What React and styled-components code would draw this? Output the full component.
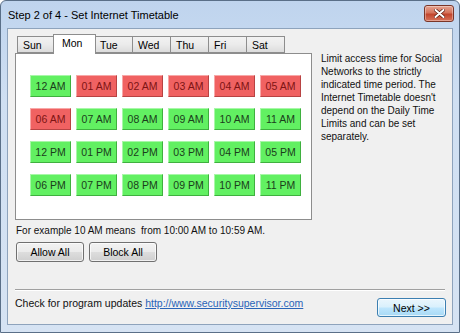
import React, { useState } from 'react';
import styled, { createGlobalStyle } from 'styled-components';

const GlobalStyle = createGlobalStyle`
  html, body {
    margin: 0;
    padding: 0;
    background: #ffffff;
  }
  body {
    font-family: 'Liberation Sans', Arial, sans-serif;
    font-size: 10px;
    color: #111;
  }
`;

const Window = styled.div`
  width: 460px;
  height: 333px;
  box-sizing: border-box;
  border: 1px solid #5a6f88;
  border-radius: 6px 6px 0 0;
  background: linear-gradient(180deg, #bfd4ee 0%, #cfdff2 30%, #d6e3f3 100%);
  display: flex;
  flex-direction: column;
  overflow: hidden;
`;

const TitleBar = styled.div`
  height: 27px;
  display: flex;
  align-items: center;
  justify-content: space-between;
  padding: 0 5px 0 7px;
  flex-shrink: 0;
`;

const Title = styled.div`
  font-size: 11px;
  color: #000;
  padding-top: 1px;
`;

const CloseButton = styled.div`
  width: 28px;
  height: 15px;
  margin-top: -3px;
  border: 1px solid #7a3528;
  border-radius: 3px;
  background: linear-gradient(180deg, #e6a491 0%, #d5735c 45%, #c2452d 55%, #d7725a 100%);
  display: flex;
  align-items: center;
  justify-content: center;
  box-shadow: inset 0 0 0 1px rgba(255, 255, 255, 0.35);
`;

const Body = styled.div`
  flex: 1;
  margin: 0 6px 7px 6px;
  border: 1px solid #8ea3bc;
  background: #f0f0f0;
  display: flex;
  flex-direction: column;
  padding: 5px 6px 0 7px;
`;

const Top = styled.div`
  display: flex;
  align-items: flex-start;
`;

const LeftColumn = styled.div`
  width: 299px;
  display: flex;
  flex-direction: column;
`;

const TabRow = styled.div`
  display: flex;
  align-items: flex-end;
  height: 19px;
  padding-left: 2px;
  position: relative;
  z-index: 1;
`;

const Tab = styled.div`
  box-sizing: border-box;
  width: ${({ $active }) => ($active ? '43px' : '39px')};
  height: ${({ $active }) => ($active ? '20px' : '17px')};
  margin: ${({ $active }) => ($active ? '0 -2px -1px -2px' : '0')};
  padding: ${({ $active }) => ($active ? '2px 0 0 8px' : '2px 0 0 5px')};
  border: 1px solid #8d8d8d;
  border-bottom: ${({ $active }) => ($active ? 'none' : '1px solid #8d8d8d')};
  background: ${({ $active }) =>
    $active ? '#ffffff' : 'linear-gradient(180deg, #f2f2f2 0%, #ebebeb 50%, #dcdcdc 100%)'};
  position: relative;
  z-index: ${({ $active }) => ($active ? 2 : 1)};
  font-size: 10.5px;
  color: #000;
  margin-right: ${({ $active }) => ($active ? '-2px' : '-1px')};
`;

const Panel = styled.div`
  box-sizing: border-box;
  height: 167px;
  border: 1px solid #8d8d8d;
  background: #ffffff;
  padding: 21px 0 0 14px;
`;

const HourGrid = styled.div`
  display: grid;
  grid-template-columns: repeat(6, 41px);
  grid-auto-rows: 22px;
  column-gap: 5px;
  row-gap: 11px;
`;

const HourButton = styled.div`
  box-sizing: border-box;
  display: flex;
  align-items: center;
  justify-content: center;
  font-size: 10.5px;
  cursor: pointer;
  background: ${({ $allowed }) => ($allowed ? '#62f062' : '#f06262')};
  color: ${({ $allowed }) => ($allowed ? '#1b3d1b' : '#7e1414')};
  border: 1px solid;
  border-color: ${({ $allowed }) =>
    $allowed ? '#a8f7a8 #3fb03f #3fb03f #a8f7a8' : '#f7a8a8 #b84343 #b84343 #f7a8a8'};
`;

const Example = styled.div`
  margin-top: 5px;
  font-size: 10px;
  color: #111;
  padding-left: 1px;
`;

const ButtonRow = styled.div`
  display: flex;
  gap: 5px;
  margin-top: 6px;
  padding-left: 1px;
`;

const Button = styled.div`
  box-sizing: border-box;
  width: ${({ $w }) => $w}px;
  height: ${({ $h }) => $h || 20}px;
  border: 1px solid #707070;
  border-radius: 3px;
  background: linear-gradient(180deg, #f2f2f2 0%, #ebebeb 48%, #dddddd 52%, #cfcfcf 100%);
  box-shadow: inset 0 0 0 1px rgba(255, 255, 255, 0.7);
  display: flex;
  align-items: center;
  justify-content: center;
  font-size: 10.5px;
  color: #000;
`;

const NextButton = styled(Button)`
  border-color: #3c7fb1;
  background: linear-gradient(180deg, #eaf6fd 0%, #d9f0fc 48%, #bee6fd 52%, #a7d9f5 100%);
`;

const Description = styled.div`
  margin: 18px 0 0 9px;
  width: 126px;
  font-size: 10px;
  line-height: 13px;
  color: #111;
`;

const Separator = styled.div`
  margin: 27px 0 0 0;
  width: 430px;
  height: 1px;
  background: #a0a0a0;
  border-bottom: 1px solid #ffffff;
`;

const Footer = styled.div`
  display: flex;
  align-items: center;
  justify-content: space-between;
  margin-top: 7px;
  padding: 0;
  width: 431px;
`;

const FooterText = styled.div`
  font-size: 10.5px;
  color: #111;
  margin-top: -9px;
`;

const Link = styled.a`
  color: #2a64b8;
  text-decoration: underline;
`;

const hours = [
  '12 AM', '01 AM', '02 AM', '03 AM', '04 AM', '05 AM',
  '06 AM', '07 AM', '08 AM', '09 AM', '10 AM', '11 AM',
  '12 PM', '01 PM', '02 PM', '03 PM', '04 PM', '05 PM',
  '06 PM', '07 PM', '08 PM', '09 PM', '10 PM', '11 PM',
];

const blocked = [1, 2, 3, 4, 5, 6];
const days = ['Sun', 'Mon', 'Tue', 'Wed', 'Thu', 'Fri', 'Sat'];

const App = () => {
  const [allowed, setAllowed] = useState(hours.map((h, i) => !blocked.includes(i)));

  const toggle = (i) => {
    setAllowed(allowed.map((a, j) => (j === i ? !a : a)));
  };

  return (
    <>
      <GlobalStyle />
      <Window>
        <TitleBar>
          <Title>Step 2 of 4 - Set Internet Timetable</Title>
          <CloseButton>
            <svg width="11" height="9" viewBox="0 0 11 9">
              <path d="M1.5 1 L9.5 8 M9.5 1 L1.5 8" stroke="#5a1a10" strokeWidth="3.4" strokeLinecap="round" />
              <path d="M1.5 1 L9.5 8 M9.5 1 L1.5 8" stroke="#ffffff" strokeWidth="2" strokeLinecap="round" />
            </svg>
          </CloseButton>
        </TitleBar>
        <Body>
          <Top>
            <LeftColumn>
              <TabRow>
                {days.map((d) => (
                  <Tab key={d} $active={d === 'Mon'}>
                    {d}
                  </Tab>
                ))}
              </TabRow>
              <Panel>
                <HourGrid>
                  {hours.map((h, i) => (
                    <HourButton key={h} $allowed={allowed[i]} onClick={() => toggle(i)}>
                      {h}
                    </HourButton>
                  ))}
                </HourGrid>
              </Panel>
              <Example>For example 10 AM means&nbsp; from 10:00 AM to 10:59 AM.</Example>
              <ButtonRow>
                <Button $w={68} onClick={() => setAllowed(hours.map(() => true))}>
                  Allow All
                </Button>
                <Button $w={68} onClick={() => setAllowed(hours.map(() => false))}>
                  Block All
                </Button>
              </ButtonRow>
            </LeftColumn>
            <Description>
              Limit access time for Social Networks to the strictly indicated time period. The
              Internet Timetable doesn't depend on the Daily Time Limits and can be set
              separately.
            </Description>
          </Top>
          <Separator />
          <Footer>
            <FooterText>
              Check for program updates <Link href="#">http://www.securitysupervisor.com</Link>
            </FooterText>
            <NextButton $w={69} $h={19}>
              Next &gt;&gt;
            </NextButton>
          </Footer>
        </Body>
      </Window>
    </>
  );
};

export default App;
